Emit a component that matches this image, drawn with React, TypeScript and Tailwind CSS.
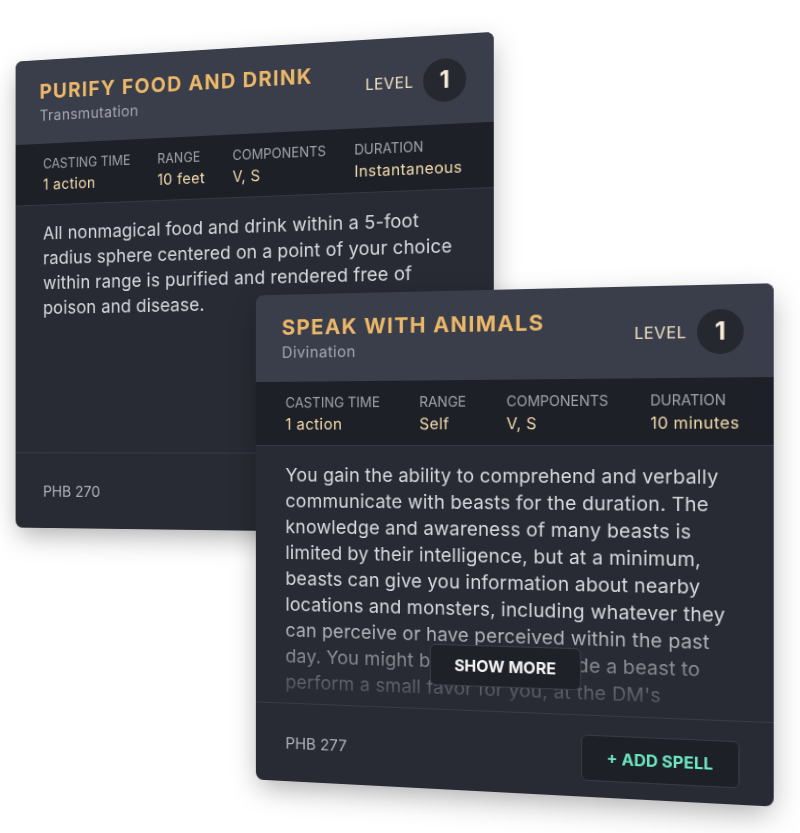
import React from "react";

type Stat = { label: string; value: string };

type Spell = {
  name: string;
  school: string;
  level: number;
  stats: Stat[];
  text: string;
  source: string;
  clipped?: boolean;
};

const spells: Spell[] = [
  {
    name: "Purify Food and Drink",
    school: "Transmutation",
    level: 1,
    stats: [
      { label: "Casting Time", value: "1 action" },
      { label: "Range", value: "10 feet" },
      { label: "Components", value: "V, S" },
      { label: "Duration", value: "Instantaneous" },
    ],
    text: "All nonmagical food and drink within a 5-foot radius sphere centered on a point of your choice within range is purified and rendered free of poison and disease.",
    source: "PHB 270",
  },
  {
    name: "Speak with Animals",
    school: "Divination",
    level: 1,
    stats: [
      { label: "Casting Time", value: "1 action" },
      { label: "Range", value: "Self" },
      { label: "Components", value: "V, S" },
      { label: "Duration", value: "10 minutes" },
    ],
    text: "You gain the ability to comprehend and verbally communicate with beasts for the duration. The knowledge and awareness of many beasts is limited by their intelligence, but at a minimum, beasts can give you information about nearby locations and monsters, including whatever they can perceive or have perceived within the past day. You might be able to persuade a beast to perform a small favor for you, at the DM's discretion.",
    source: "PHB 277",
    clipped: true,
  },
];

function SpellCard({ spell, className = "" }: { spell: Spell; className?: string }) {
  return (
    <div
      className={`w-[520px] overflow-hidden rounded-lg bg-[#292b34] shadow-[0_10px_30px_-4px_rgba(0,0,0,0.35)] ${className}`}
    >
      {/* header */}
      <div className="flex items-center justify-between bg-[#3a3d4a] px-7 pt-5 pb-[19px]">
        <div>
          <h3 className="text-[22px] font-bold uppercase leading-7 tracking-[0.06em] text-[#ebb86a]">
            {spell.name}
          </h3>
          <p className="text-base leading-6 tracking-wide text-[#a4a7b0]">{spell.school}</p>
        </div>
        <div className="flex items-center gap-2.5">
          <span className="text-base tracking-wide text-[#f1e3c4]">LEVEL</span>
          <span className="flex h-11 w-11 items-center justify-center rounded-full bg-[#262830] text-2xl font-bold text-[#f5ecd8]">
            {spell.level}
          </span>
        </div>
      </div>

      {/* stats */}
      <div className="flex justify-between border-b border-[#363944] bg-[#1e2027] px-8 pt-3 pb-2.5">
        {spell.stats.map((s) => (
          <div key={s.label}>
            <div className="text-sm uppercase leading-5 text-[#a0a3ac]">{s.label}</div>
            <div className="text-base leading-6 tracking-wide text-[#f2dcae]">{s.value}</div>
          </div>
        ))}
      </div>

      {/* description */}
      <div className="relative h-[268px] overflow-hidden px-8 pt-[17px]">
        <p className="max-h-[243px] overflow-hidden text-[19px] leading-[27px] tracking-[0.01em] text-[#d8dae0]">
          {spell.text}
        </p>
        {spell.clipped && (
          <>
            <div className="absolute inset-x-0 bottom-0 h-[100px] bg-linear-to-b from-[#292b34]/0 to-[#292b34]/90" />
            <button className="absolute bottom-6 left-1/2 -translate-x-1/2 rounded-md border border-[#3b3e49] bg-[#1f2128] px-6 py-2 text-base font-bold leading-6 text-[#f4f4f5]">
              SHOW MORE
            </button>
          </>
        )}
      </div>

      {/* footer */}
      <div className="flex h-[82px] items-center justify-between border-t border-[#383b45] px-8">
        <span className="text-base text-[#b0b3bb]">{spell.source}</span>
        <button className="mt-0.5 rounded-md border border-[#383b46] bg-[#1e2027] px-6 py-2.5 text-base font-bold leading-6 text-[#6de9c3]">
          + ADD SPELL
        </button>
      </div>
    </div>
  );
}

export default function App() {
  return (
    <div className="h-[833px] w-[800px] overflow-hidden bg-white pt-[27px] font-['Inter',sans-serif] [perspective-origin:400px_445px] [perspective:1000px]">
      <div className="-ml-[26px] grid w-max items-start justify-items-start [transform-origin:597px_0px] [transform:rotateY(-8.7deg)]">
        <SpellCard spell={spells[0]} className="col-start-1 row-start-1" />
        <SpellCard spell={spells[1]} className="col-start-1 row-start-1 ml-[271px] mt-[261px]" />
      </div>
    </div>
  );
}
